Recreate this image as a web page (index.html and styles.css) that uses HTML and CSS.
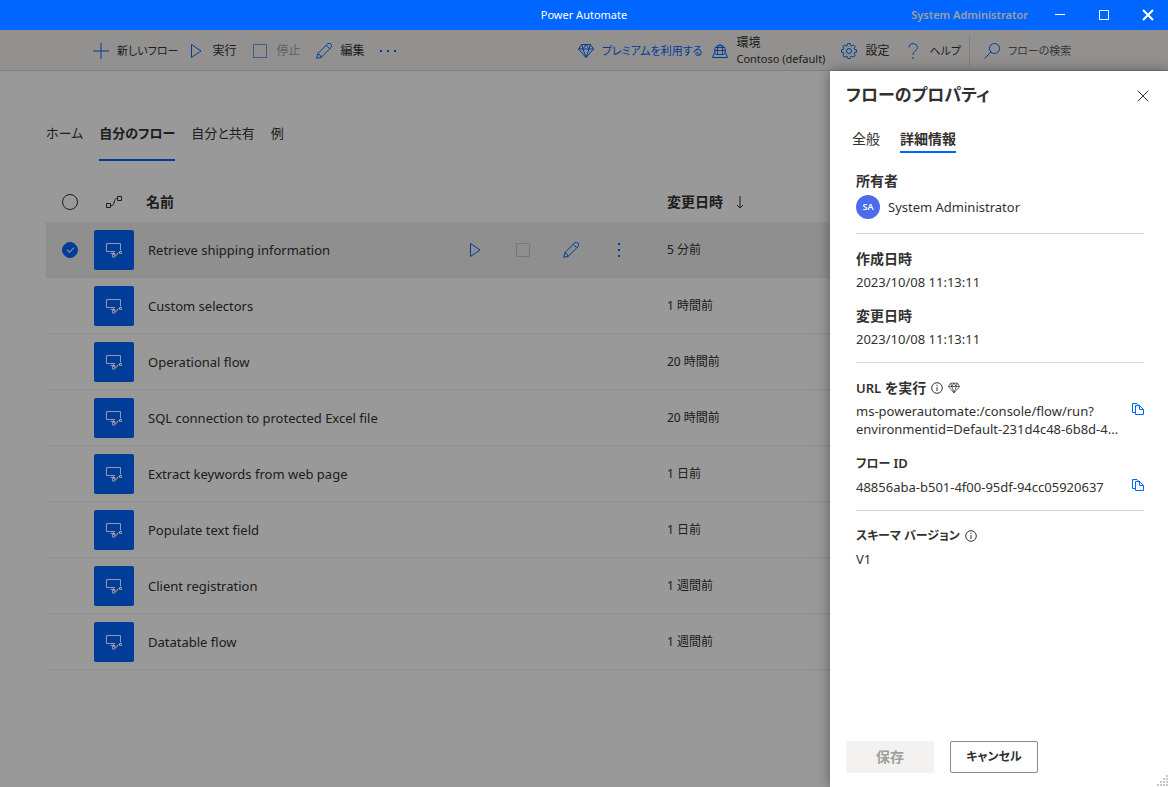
FILE: index.html
```html
<!DOCTYPE html>
<html lang="ja">
<head>
<meta charset="utf-8">
<meta name="viewport" content="width=device-width, initial-scale=1">
<title>Power Automate</title>
<link rel="stylesheet" href="styles.css">
</head>
<body>
<svg class="defs" aria-hidden="true">
  <symbol id="i-plus" viewBox="0 0 16 16"><path d="M8 0v16M0 8h16"/></symbol>
  <symbol id="i-play" viewBox="0 0 16 16"><path d="M3.500 1.500v13L13 8z"/></symbol>
  <symbol id="i-stop" viewBox="0 0 16 16"><path d="M1.500 1.500h13v13h-13z"/></symbol>
  <symbol id="i-pencil" viewBox="0 0 16 16"><path d="M.7 15.300l1-4.500L11.500 1a2.400 2.400 0 0 1 3.500 3.500L5.200 14.300zM1.700 10.800q2.600.4 3.500 3.500M10.200 2.300L13.700 5.800"/></symbol>
  <symbol id="i-diamond" viewBox="0 0 16 16"><path d="M3.500 1.500h9L15.500 6 8 14.500.5 6zM.5 6h15M5 6l3 8.500L11 6M3.500 1.500L5 6l3-4.500L11 6l1.500-4.500"/></symbol>
  <symbol id="i-env" viewBox="0 0 16 16"><path d="M4 11.500A5.500 5.500 0 1 1 12 11.500zM2.500 7.500h11M3.500 4.500h9M7.500 1.500C5 4 5 8.500 6 11.500M8.500 1.500c2.500 2.500 2.500 7 1.500 10M2.300 10L.5 14.500h15L13.700 10"/></symbol>
  <symbol id="i-gear" viewBox="0 0 16 16"><circle cx="8" cy="8" r="2.500"/><path d="M6.800.5h2.400l.4 2 1.300.5L12.600 1.900l1.600 1.700-1.100 1.600.5 1.300 1.900.4v2.300l-1.900.4-.5 1.300 1.100 1.600-1.700 1.700-1.600-1.100-1.300.5-.4 1.900H6.800l-.4-1.900-1.300-.5-1.600 1.100-1.700-1.700 1.100-1.600-.5-1.300-1.900-.4V6.900l1.900-.4.500-1.300-1.100-1.600 1.700-1.700L5.100 3l1.300-.5z"/></symbol>
  <symbol id="i-help" viewBox="0 0 16 16"><path d="M4 4.500C4 2 5.700.7 8 .7s4.300 1.400 4.300 3.800C12.300 8 8 7.500 8 12M8 14v2"/></symbol>
  <symbol id="i-search" viewBox="0 0 16 16"><circle cx="10.500" cy="5.500" r="5"/><path d="M7 9L.5 15.500"/></symbol>
  <symbol id="i-copy" viewBox="0 0 12 12"><path d="M3.500 9.500h-3v-9h4.500l2 2M3.500 2.500h4l4 4v5h-8zM7.500 2.500v4h4"/></symbol>
  <symbol id="i-info" viewBox="0 0 12 12"><circle cx="6" cy="6" r="5.300"/><path d="M6 5v4M6 2.800v1.200"/></symbol>
  <symbol id="i-x" viewBox="0 0 12 12"><path d="M.7.7l10.600 10.600M11.300.7L.7 11.300"/></symbol>
  <symbol id="i-flow" viewBox="0 0 18 16"><path d="M1.500 9.500h4v4h-4zM12.500 2.500h4v4h-4zM5.500 11.500h1.500c2.500 0 2-7 4.500-7h1"/></symbol>
  <symbol id="i-desktop" viewBox="0 0 18 18"><path d="M10 10.500H1.500v-8h14v7M5.500 12.500h5M8.500 10.500v2"/><path d="M7.500 13.500h2.500v2.500H7.500zM14.500 10.500h2v2h-2zM10 14.500h1c1.500 0 1-3 2.500-3h1"/></symbol>
</svg>

<header class="titlebar">
  <h1 class="app-name">Power Automate</h1>
  <div class="window-side">
    <span class="account">System Administrator</span>
    <div class="window-buttons">
      <button type="button" aria-label="最小化"><svg class="win" viewBox="0 0 12 12"><path d="M1 5.500h10"/></svg></button>
      <button type="button" aria-label="最大化"><svg class="win" viewBox="0 0 12 12"><path d="M1.500 1.500h9v9h-9z"/></svg></button>
      <button type="button" aria-label="閉じる"><svg class="win thick" viewBox="0 0 12 12"><path d="M1 1l10 10M11 1L1 11"/></svg></button>
    </div>
  </div>
</header>

<div class="workspace">
  <div class="toolbar">
    <div class="tools">
      <button type="button" class="tool kana"><svg class="icon"><use href="#i-plus"/></svg>新しいフロー</button>
      <button type="button" class="tool"><svg class="icon"><use href="#i-play"/></svg>実行</button>
      <button type="button" class="tool" disabled><svg class="icon"><use href="#i-stop"/></svg>停止</button>
      <button type="button" class="tool"><svg class="icon"><use href="#i-pencil"/></svg>編集</button>
      <button type="button" class="tool" aria-label="その他"><svg class="icon dots" viewBox="0 0 16 16"><path d="M0 7h2v2H0zM7 7h2v2H7zM14 7h2v2h-2z"/></svg></button>
    </div>
    <div class="tools">
      <button type="button" class="tool kana premium"><svg class="icon"><use href="#i-diamond"/></svg>プレミアムを利用する</button>
      <button type="button" class="tool"><svg class="icon"><use href="#i-env"/></svg><span>環境<br><span class="env-name">Contoso (default)</span></span></button>
      <button type="button" class="tool"><svg class="icon"><use href="#i-gear"/></svg>設定</button>
      <button type="button" class="tool kana help"><svg class="icon"><use href="#i-help"/></svg>ヘルプ</button>
      <label class="search"><svg class="icon"><use href="#i-search"/></svg><input type="search" placeholder="フローの検索" aria-label="フローの検索"></label>
    </div>
  </div>

  <main class="content">
    <nav class="tabs">
      <a href="#home">ホーム</a>
      <a href="#mine" class="current" aria-current="page">自分のフロー</a>
      <a href="#shared">自分と共有</a>
      <a href="#examples">例</a>
    </nav>
    <table class="flows">
      <thead>
        <tr>
          <th class="c-select"><input type="checkbox" class="pick" aria-label="すべて選択"></th>
          <th class="c-icon"><svg class="flow-icon"><use href="#i-flow"/></svg></th>
          <th class="c-name">名前</th>
          <th class="c-actions"></th>
          <th class="c-date">変更日時<svg class="sort" viewBox="0 0 8 14"><path d="M4 1v12M1 10l3 3 3-3"/></svg></th>
        </tr>
      </thead>
      <tbody>
        <tr class="selected">
          <td><input type="checkbox" class="pick" checked aria-label="Retrieve shipping information"></td>
          <td><span class="tile"><svg><use href="#i-desktop"/></svg></span></td>
          <td class="name">Retrieve shipping information</td>
          <td>
            <div class="actions">
              <button type="button" aria-label="実行"><svg class="icon"><use href="#i-play"/></svg></button>
              <button type="button" aria-label="停止" disabled><svg class="icon"><use href="#i-stop"/></svg></button>
              <button type="button" aria-label="編集"><svg class="icon"><use href="#i-pencil"/></svg></button>
              <button type="button" aria-label="その他"><svg class="icon dots" viewBox="0 0 16 16"><path d="M7 1h2v2H7zM7 7h2v2H7zM7 13h2v2H7z"/></svg></button>
            </div>
          </td>
          <td class="date">5 分前</td>
        </tr>
        <tr><td></td><td><span class="tile"><svg><use href="#i-desktop"/></svg></span></td><td class="name">Custom selectors</td><td></td><td class="date">1 時間前</td></tr>
        <tr><td></td><td><span class="tile"><svg><use href="#i-desktop"/></svg></span></td><td class="name">Operational flow</td><td></td><td class="date">20 時間前</td></tr>
        <tr><td></td><td><span class="tile"><svg><use href="#i-desktop"/></svg></span></td><td class="name">SQL connection to protected Excel file</td><td></td><td class="date">20 時間前</td></tr>
        <tr><td></td><td><span class="tile"><svg><use href="#i-desktop"/></svg></span></td><td class="name">Extract keywords from web page</td><td></td><td class="date">1 日前</td></tr>
        <tr><td></td><td><span class="tile"><svg><use href="#i-desktop"/></svg></span></td><td class="name">Populate text field</td><td></td><td class="date">1 日前</td></tr>
        <tr><td></td><td><span class="tile"><svg><use href="#i-desktop"/></svg></span></td><td class="name">Client registration</td><td></td><td class="date">1 週間前</td></tr>
        <tr><td></td><td><span class="tile"><svg><use href="#i-desktop"/></svg></span></td><td class="name">Datatable flow</td><td></td><td class="date">1 週間前</td></tr>
      </tbody>
    </table>
  </main>

  <div class="scrim"></div>

  <aside class="panel" role="dialog" aria-labelledby="panel-title">
    <div class="panel-head">
      <h2 id="panel-title">フローのプロパティ</h2>
      <button type="button" class="close" aria-label="閉じる"><svg><use href="#i-x"/></svg></button>
    </div>
    <nav class="panel-tabs">
      <a href="#general">全般</a>
      <a href="#details" class="current" aria-current="page">詳細情報</a>
    </nav>
    <div class="details">
      <section class="group">
        <h3>所有者</h3>
        <p class="owner"><span class="avatar">SA</span>System Administrator</p>
      </section>
      <section class="group">
        <h3>作成日時</h3>
        <p>2023/10/08 11:13:11</p>
        <h3>変更日時</h3>
        <p>2023/10/08 11:13:11</p>
      </section>
      <section class="group">
        <h3><span><span class="latin">URL</span> を実行</span><svg class="mini"><use href="#i-info"/></svg><svg class="mini" viewBox="0 0 16 16"><use href="#i-diamond"/></svg></h3>
        <div class="copy-row">
          <p>ms-powerautomate:/console/flow/run?<br>environmentid=Default-231d4c48-6b8d-4...</p>
          <button type="button" class="copy" aria-label="URL をコピー"><svg><use href="#i-copy"/></svg></button>
        </div>
        <h3 class="kana-title"><span>フロー <span class="latin">ID</span></span></h3>
        <div class="copy-row">
          <p>48856aba-b501-4f00-95df-94cc05920637</p>
          <button type="button" class="copy" aria-label="フロー ID をコピー"><svg><use href="#i-copy"/></svg></button>
        </div>
      </section>
      <section class="group">
        <h3 class="kana-title">スキーマ バージョン<svg class="mini"><use href="#i-info"/></svg></h3>
        <p>V1</p>
      </section>
    </div>
    <div class="panel-foot">
      <button type="button" class="button" disabled>保存</button>
      <button type="button" class="button kana-button">キャンセル</button>
    </div>
    <svg class="grip" viewBox="0 0 12 12"><path d="M10 0h2v2h-2zM7 3h2v2H7zM10 3h2v2h-2zM4 6h2v2H4zM7 6h2v2H7zM10 6h2v2h-2zM1 9h2v2H1zM4 9h2v2H4zM7 9h2v2H7zM10 9h2v2h-2z"/></svg>
  </aside>
</div>
</body>
</html>
```
FILE: styles.css
```css
* { box-sizing: border-box; }

body {
  margin: 0;
  min-height: 100vh;
  display: flex;
  flex-direction: column;
  font-family: "Noto Sans", "Noto Sans CJK JP", sans-serif;
  font-size: 13px;
  line-height: 18px;
  color: #323130;
  font-feature-settings: "palt";
}

h1, h2, h3, p { margin: 0; font-weight: 400; }
button { font: inherit; font-feature-settings: inherit; color: inherit; background: none; border: 0; padding: 0; }
a { color: inherit; text-decoration: none; }
svg { fill: none; stroke: currentColor; flex: none; }
.defs { position: absolute; width: 0; height: 0; }

.titlebar {
  display: grid;
  grid-template-columns: 1fr auto 1fr;
  align-items: center;
  height: 30px;
  background: #0066ff;
  color: #fff;
}
.app-name { grid-column: 2; font-size: 11px; }
.window-side { display: flex; justify-content: flex-end; align-items: center; gap: 12px; }
.account { font-size: 11px; font-weight: 600; color: #a19f9d; }
.window-buttons { display: flex; gap: 4px; }
.window-buttons button { width: 40px; height: 28px; display: grid; place-items: center; }
.win { width: 12px; height: 12px; }
.thick { stroke-width: 2; }

.workspace { position: relative; flex: 1; display: flex; flex-direction: column; }

.toolbar {
  display: flex;
  justify-content: space-between;
  height: 41px;
  padding: 1px 0 0 93px;
  background: #f3f2f1;
  border-bottom: 1px solid #d8d6d4;
}
.tools { display: flex; align-items: center; gap: 16px; }
.tool { display: flex; align-items: center; gap: 8px; font-size: 12px; line-height: 16px; text-align: left; white-space: nowrap; }
.tool:disabled { color: #a19f9d; }
.tool.kana { font-size: 11px; margin-right: -6px; }
.env-name { font-size: 11px; }
.icon { width: 16px; height: 16px; color: #0066ff; }
.tool:disabled .icon { opacity: .6; }
.dots { fill: currentColor; stroke: none; }
.premium { color: #0066ff; }
.tool.help { margin-right: -8px; }
.search {
  display: flex;
  align-items: center;
  gap: 8px;
  width: 199px;
  height: 32px;
  padding-left: 14px;
  border-left: 1px solid #d8d6d4;
}
.search input { flex: 1; min-width: 0; border: 0; background: none; padding: 0; font: inherit; font-size: 11px; font-feature-settings: inherit; }
.search input::placeholder { color: #605e5c; opacity: 1; }

.content { flex: 1; padding: 48px 48px 24px 46px; }
.tabs { display: flex; gap: 16px; line-height: 20px; margin-bottom: 21px; }
.tabs a { height: 42px; padding-top: 4px; border-bottom: 2px solid transparent; }
.tabs .current { font-weight: 700; border-color: #0066ff; }

.flows { width: 100%; table-layout: fixed; border-spacing: 0; }
.flows th { height: 40px; padding: 0; text-align: left; font-size: 14px; font-weight: 700; }
.flows td { height: 56px; padding: 0; border-bottom: 1px solid #edebe9; }
.c-select { width: 48px; }
.c-icon { width: 40px; }
.c-actions { width: 216px; }
.c-date { width: 453px; }
.flows .c-name { padding-left: 12px; }
.flows .name { padding-left: 14px; }
.date { font-size: 12px; }
.selected { background: #f0efee; }
.pick {
  display: block;
  appearance: none;
  width: 16px;
  height: 16px;
  margin: 0 auto;
  border: 1px solid #323130;
  border-radius: 50%;
}
.pick:checked {
  border-color: #0066ff;
  background: #0066ff;
  display: grid;
  place-items: center;
}
.pick:checked::before {
  content: "";
  width: 6px;
  height: 3px;
  margin-bottom: 2px;
  border: solid #fff;
  border-width: 0 0 1px 1px;
  rotate: -45deg;
}
.flow-icon { display: block; width: 18px; height: 16px; margin: 0 auto; }
.sort { width: 8px; height: 14px; margin-left: 13px; vertical-align: -2px; }
.tile { display: grid; place-items: center; width: 40px; height: 40px; border-radius: 2px; background: #0066ff; color: #fff; }
.tile svg { width: 18px; height: 18px; }
.actions { display: flex; }
.actions button { width: 48px; height: 32px; display: grid; place-items: center; }
.actions button:disabled .icon { color: #c8c6c4; }

.scrim { position: absolute; inset: 0; background: rgba(0, 0, 0, .4); }

.panel {
  position: absolute;
  top: 41px;
  right: 0;
  bottom: 0;
  width: 338px;
  display: flex;
  flex-direction: column;
  padding: 8px 24px 14px 16px;
  background: #fff;
  box-shadow: 0 0 12px rgba(0, 0, 0, .4);
}
.panel-head { display: flex; justify-content: space-between; height: 32px; }
.panel-head h2 { font-size: 17px; line-height: 32px; font-weight: 700; }
.close { width: 32px; height: 32px; margin: 1px -15px 0 0; display: grid; place-items: center; }
.close svg { width: 12px; height: 12px; }
.panel-tabs { display: flex; gap: 20px; padding-left: 6px; font-size: 14px; line-height: 20px; margin-top: 16px; }
.panel-tabs a { height: 26px; padding-top: 2px; border-bottom: 2px solid transparent; }
.panel-tabs .current { font-weight: 700; border-color: #0066ff; }
.details { flex: 1; padding: 3px 0 0 10px; }
.group { padding: 15px 0 14px; }
.group + .group { border-top: 1px solid #d8d6d4; }
.group h3 { display: flex; align-items: center; font-size: 14px; line-height: 20px; font-weight: 700; margin-bottom: 4px; }
.group .kana-title { font-size: 12px; }
.latin { font-size: 13px; font-weight: 600; }
.group * + h3 { margin-top: 15px; }
.mini { width: 12px; height: 12px; margin-left: 5px; }
.group .owner { display: flex; align-items: center; gap: 8px; line-height: 24px; }
.avatar { width: 24px; height: 24px; border-radius: 50%; background: #4f6bed; color: #fff; font-size: 9px; font-weight: 600; text-align: center; }
.copy-row { display: flex; justify-content: space-between; align-items: flex-start; white-space: nowrap; }
.copy { width: 12px; height: 14px; flex: none; }
.copy svg { display: block; width: 12px; height: 12px; color: #0066ff; }
.panel-foot { display: flex; gap: 16px; }
.button { width: 88px; height: 32px; border: 1px solid #8a8886; border-radius: 2px; font-size: 14px; font-weight: 700; }
.kana-button { font-size: 12px; }
.button:disabled { background: #f3f2f1; border-color: #f3f2f1; color: #a19f9d; }
.grip { position: absolute; right: 0; bottom: 0; width: 12px; height: 12px; fill: #c3c8d4; stroke: none; }
```
